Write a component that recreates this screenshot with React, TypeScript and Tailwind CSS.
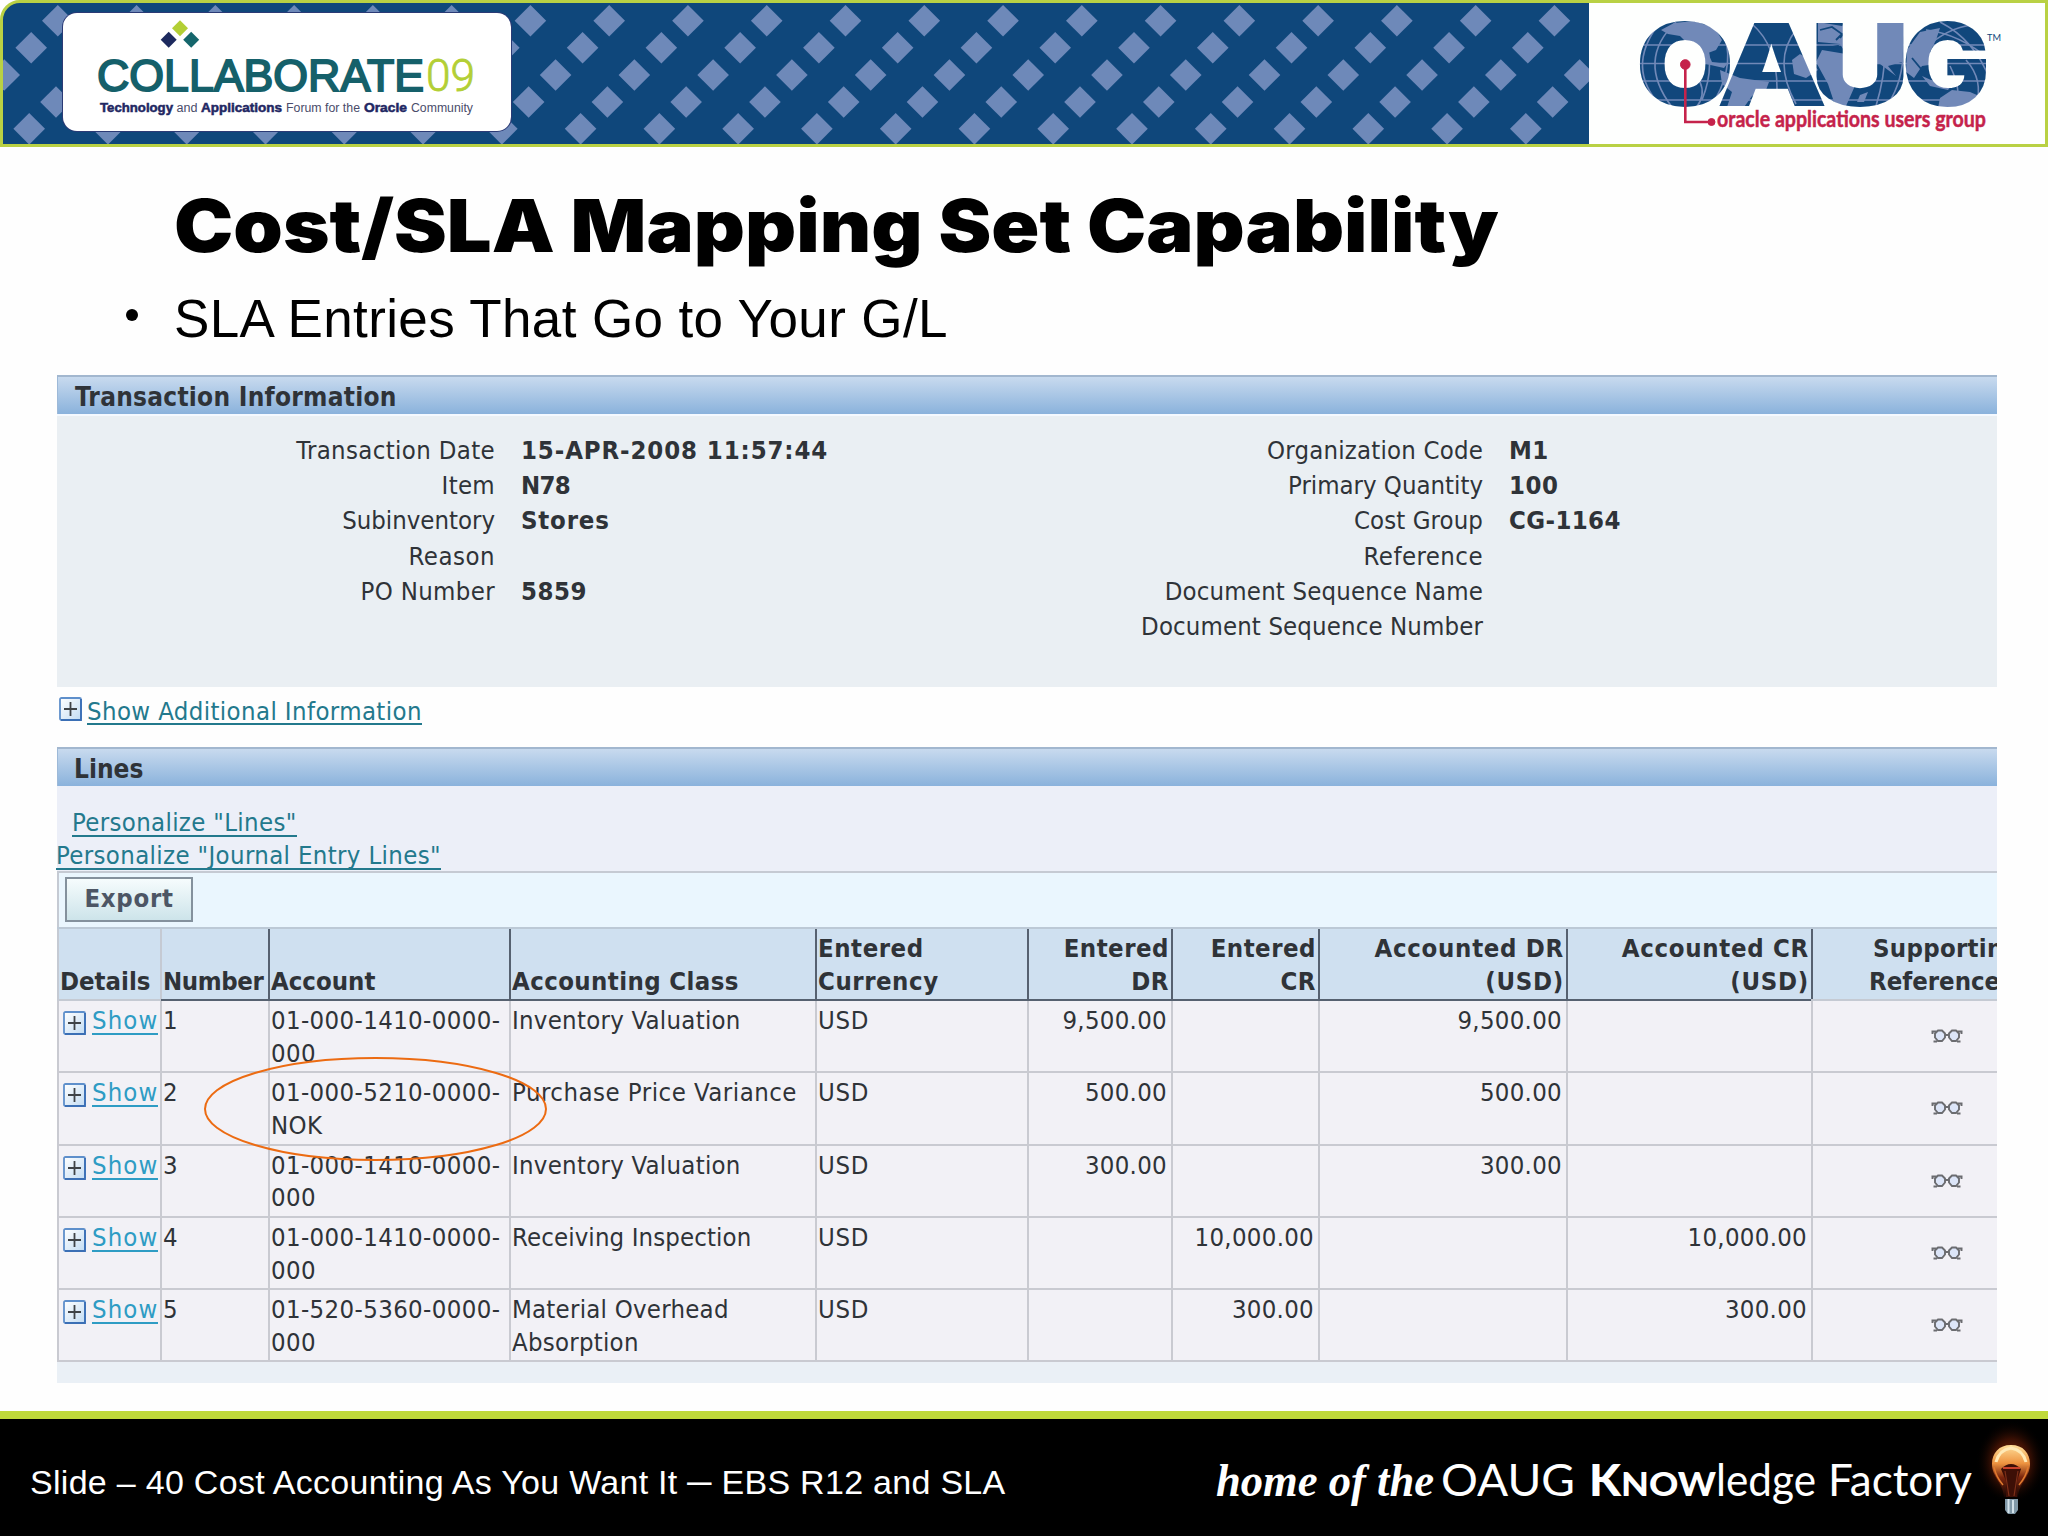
import { clsx } from 'clsx';

type Field = { label: string; value?: string; tracking?: string; valueTracking?: string };

type Line = {
  number: number;
  account: [string, string];
  accountingClass: string[];
  classTracking: string;
  currency: string;
  enteredDr?: string;
  enteredCr?: string;
};

const leftFields: Field[] = [
  { label: 'Transaction Date', value: '15-APR-2008 11:57:44', tracking: 'tracking-[0.36px]', valueTracking: 'tracking-[0.9px]' },
  { label: 'Item', value: 'N78', tracking: 'tracking-[0.3px]', valueTracking: 'tracking-[-0.7px]' },
  { label: 'Subinventory', value: 'Stores', valueTracking: 'tracking-[0.8px]' },
  { label: 'Reason', tracking: 'tracking-[0.5px]' },
  { label: 'PO Number', value: '5859', tracking: 'tracking-[0.35px]', valueTracking: 'tracking-[0.5px]' },
];

const rightFields: Field[] = [
  { label: 'Organization Code', value: 'M1', tracking: 'tracking-[0.2px]', valueTracking: 'tracking-[0.5px]' },
  { label: 'Primary Quantity', value: '100', valueTracking: 'tracking-[0.5px]' },
  { label: 'Cost Group', value: 'CG-1164', tracking: 'tracking-[0.1px]', valueTracking: 'tracking-[0.4px]' },
  { label: 'Reference', tracking: 'tracking-[0.45px]' },
  { label: 'Document Sequence Name', tracking: 'tracking-[0.18px]' },
  { label: 'Document Sequence Number', tracking: 'tracking-[0.13px]' },
];

const lines: Line[] = [
  { number: 1, account: ['01-000-1410-0000-', '000'], accountingClass: ['Inventory Valuation'], classTracking: 'tracking-[0.27px]', currency: 'USD', enteredDr: '9,500.00' },
  { number: 2, account: ['01-000-5210-0000-', 'NOK'], accountingClass: ['Purchase Price Variance'], classTracking: 'tracking-[0.5px]', currency: 'USD', enteredDr: '500.00' },
  { number: 3, account: ['01-000-1410-0000-', '000'], accountingClass: ['Inventory Valuation'], classTracking: 'tracking-[0.27px]', currency: 'USD', enteredDr: '300.00' },
  { number: 4, account: ['01-000-1410-0000-', '000'], accountingClass: ['Receiving Inspection'], classTracking: 'tracking-[0.13px]', currency: 'USD', enteredCr: '10,000.00' },
  { number: 5, account: ['01-520-5360-0000-', '000'], accountingClass: ['Material Overhead', 'Absorption'], classTracking: 'tracking-[0.25px]', currency: 'USD', enteredCr: '300.00' },
];

const columns = 'grid grid-cols-[103px_108px_241px_306px_212px_144px_147px_248px_245px_186px]';

// Diamond rows of the banner: x of one diamond in the row, y of its centre
const diamondRows = [
  [57.8, 20.7],
  [31.2, 47.8],
  [4.2, 75],
  [56, 102],
  [29.2, 128.8],
];

function Diamond({ x, y, r, fill }: { x: number; y: number; r: number; fill: string }) {
  return <path d={`M${x} ${y - r}L${x + r} ${y}L${x} ${y + r}L${x - r} ${y}Z`} fill={fill} />;
}

function CollaborateLogo() {
  return (
    <svg width="448" height="118" viewBox="63 13 448 118" className="block">
      <Diamond x={180} y={28.3} r={8} fill="#b3cf35" />
      <Diamond x={168.7} y={39.8} r={8} fill="#1d2a5e" />
      <Diamond x={191.2} y={39.8} r={8} fill="#15666c" />
      <g fontFamily="Liberation Sans, sans-serif">
        <text x="97" y="91" fontSize="45" fill="#15606a" stroke="#15606a" strokeWidth="1.900" textLength="327" lengthAdjust="spacingAndGlyphs">COLLABORATE</text>
        <text x="426" y="91" fontSize="45" fill="#b3cf35" stroke="#b3cf35" strokeWidth=".8" fontFamily="Roboto, sans-serif" fontWeight="300" textLength="49" lengthAdjust="spacingAndGlyphs">09</text>
        <g fontSize="12.5" fill="#4a4c6a">
          <text x="100" y="111.500" fill="#1f2763" stroke="#1f2763" strokeWidth=".5" fontWeight="700" textLength="73" lengthAdjust="spacingAndGlyphs">Technology</text>
          <text x="176.500" y="111.500" textLength="21" lengthAdjust="spacingAndGlyphs">and</text>
          <text x="201" y="111.500" fill="#1f2763" stroke="#1f2763" strokeWidth=".5" fontWeight="700" textLength="81" lengthAdjust="spacingAndGlyphs">Applications</text>
          <text x="286" y="111.500" textLength="74" lengthAdjust="spacingAndGlyphs">Forum for the</text>
          <text x="364" y="111.500" fill="#1f2763" stroke="#1f2763" strokeWidth=".5" fontWeight="700" textLength="43" lengthAdjust="spacingAndGlyphs">Oracle</text>
          <text x="411" y="111.500" textLength="62" lengthAdjust="spacingAndGlyphs">Community</text>
        </g>
      </g>
    </svg>
  );
}

function OaugLogo() {
  return (
    <svg width="456" height="141" viewBox="1589 3 456 141" className="block">
      <defs>
        <mask id="oaug" maskUnits="userSpaceOnUse" x="1589" y="3" width="456" height="141">
          <g fontFamily="Inter, sans-serif" fontWeight="800" fontSize="112" fill="#fff" stroke="#fff" strokeWidth="2">
            <text x="1636" y="105" textLength="98" lengthAdjust="spacingAndGlyphs">O</text>
            <text x="1718" y="105" textLength="108" lengthAdjust="spacingAndGlyphs">A</text>
            <text x="1810" y="105" textLength="100" lengthAdjust="spacingAndGlyphs">U</text>
            <text x="1902" y="105" textLength="88" lengthAdjust="spacingAndGlyphs">G</text>
          </g>
        </mask>
      </defs>
      <g mask="url(#oaug)">
        <rect x="1630" y="15" width="365" height="100" fill="#11477c" />
        <g stroke="#7189b8" strokeWidth="1.600" fill="none">
          <path d="M1630 45H1990M1630 63.500H1990M1630 81H1990M1630 100H1990" />
          <path d="M1676 22Q1636 60 1672 107M1658 25Q1626 68 1660 105M1700 82Q1706 95 1696 108M1722 28Q1736 62 1716 98" />
          <path d="M1752 24Q1782 50 1776 106M1796 30Q1772 60 1796 104M1700 30Q1718 60 1702 100M1882 22Q1890 60 1876 106M1900 22Q1910 70 1888 104" />
          <path d="M1926 30Q1960 34 1990 60M1940 22Q1975 40 1990 80M1930 44Q1960 20 1990 26M1950 66Q1962 90 1956 106M1966 60Q1984 80 1976 106" />
        </g>
        <g fill="#7189b8">
          <path d="M1661 30L1674 23L1694 21L1715 28L1722 40L1716 50L1708 53L1712 62L1727 64L1724 68L1706 64L1698 53L1688 44L1680 36L1668 34Z" />
          <path d="M1720 70L1740 78L1769 82L1766 90L1752 96L1742 110H1726L1732 92L1722 84Z" />
          <path d="M1792 60L1800 54L1810 60L1818 70L1806 78L1794 74Z" />
          <path d="M1818 22L1842 26L1848 20L1888 18L1905 22L1902 62L1888 66L1896 76L1880 64L1858 60L1854 88L1846 106L1836 108L1828 84L1816 62L1822 50L1846 54L1840 44L1818 42Z" />
          <path d="M1860 95L1868 92L1864 102L1857 102Z" />
          <path d="M1907 50L1920 32L1940 28L1936 40L1930 52L1936 64L1922 66L1914 78L1906 72Z" />
          <path d="M1940 98L1952 90L1970 92L1984 98L1978 108H1938Z" />
          <path d="M1922 76L1940 84L1954 82L1948 90L1930 86Z" />
        </g>
        <g stroke="#11477c" strokeWidth="1.800" fill="none">
          <path d="M1820 30L1832 27L1842 34L1836 40M1822 49L1838 46L1844 52M1848 28L1840 38M1912 58L1922 70L1934 76M1926 68L1940 70" />
        </g>
      </g>
      <g fill="#c5234b" stroke="#c5234b">
        <circle cx="1685.300" cy="64.500" r="4.800" />
        <circle cx="1711.500" cy="122" r="3.500" />
        <path d="M1685.300 64V122H1711" fill="none" strokeWidth="2.600" />
      </g>
      <text x="1717" y="126.700" fontFamily="Lato, sans-serif" fontWeight="700" fontSize="23.500" fill="#c5234b" stroke="#c5234b" strokeWidth=".5" textLength="269" lengthAdjust="spacingAndGlyphs">oracle applications users group</text>
      <text x="1987" y="41" fontFamily="Lato, sans-serif" fontSize="9.500" fill="#11477c" textLength="14" lengthAdjust="spacingAndGlyphs">TM</text>
    </svg>
  );
}

function Banner() {
  return (
    <header className="relative flex h-[147px] justify-between overflow-hidden rounded-tl-[20px] border-3 border-[#b9d144] bg-[#0f477b]">
      <svg width="2048" height="147" className="absolute -top-[3px] -left-[3px]">
        {diamondRows.flatMap(([x, y]) =>
          Array.from({ length: 21 }, (_, i) => (
            <Diamond key={`${y}-${i}`} x={x + i * 78.77} y={y} r={15.8} fill="#6e89b9" />
          ))
        )}
      </svg>
      <div className="relative mt-[10px] ml-[60px] h-[118px] w-[448px] rounded-[14px] bg-white shadow-[0_0_0_1px_#2b3a75]">
        <CollaborateLogo />
      </div>
      <div className="relative h-full w-[456px] bg-[#fefffe]">
        <OaugLogo />
      </div>
    </header>
  );
}

function ExpandIcon() {
  return (
    <svg width="23" height="24" viewBox="0 0 23 24" className="shrink-0">
      <defs>
        <linearGradient id="expand" x1="0" y1="0" x2="1" y2="1">
          <stop offset="0" stopColor="#ffffff" />
          <stop offset="1" stopColor="#c3dcf3" />
        </linearGradient>
      </defs>
      <rect x="1" y="1" width="21" height="22" rx="1.500" fill="url(#expand)" stroke="#5e8fcb" strokeWidth="1.800" />
      <path d="M22 2V23H2" fill="none" stroke="#3b6fb5" strokeWidth="1.800" />
      <path d="M11.500 5V19M5 12H18" stroke="#3f4347" strokeWidth="1.800" />
    </svg>
  );
}

function GlassesIcon() {
  return (
    <svg width="32" height="14" viewBox="0 0 32 14" fill="#dce5f8" stroke="#6b6c70" strokeWidth="1.900">
      <path d="M7 1.500H11L14 4.500V8.500L11 12H7L4 8.500V4.500ZM21 1.500H25L28 4.500V8.500L25 12H21L18 8.500V4.500Z" />
      <path d="M14 6H18M.500 2.500H5.500M31.500 2.500H26.500M1.500 2V5M30.500 2V5M2.500 12.500H6M26 12.500H29.500" fill="none" />
    </svg>
  );
}

function SectionHeader({ title, className }: { title: string; className?: string }) {
  return (
    <div className="flex h-[39px] items-center border-t-2 border-[#a2b7cf] bg-gradient-to-b from-[#c8daee] to-[#8ab2dc] pt-[2px] shadow-[inset_1px_0_0_#9db9d8]">
      <h2 className={clsx('text-[26px] leading-[32px] font-bold', className)}>{title}</h2>
    </div>
  );
}

function FieldList({ fields, className }: { fields: Field[]; className: string }) {
  return (
    <dl className={clsx('grid auto-rows-[35.2px] content-start gap-x-[26px] leading-[35.2px]', className)}>
      {fields.map((field) => (
        <div key={field.label} className="col-span-2 grid grid-cols-subgrid whitespace-nowrap">
          <dt className={clsx('text-right', field.tracking)}>{field.label}</dt>
          <dd className={clsx('font-bold', field.valueTracking)}>{field.value}</dd>
        </div>
      ))}
    </dl>
  );
}

function HeaderCell({ text, right, light, tracking }: { text: string[]; right?: boolean; light?: boolean; tracking?: string }) {
  return (
    <div
      className={clsx(
        'flex flex-col justify-end border-l-2 pb-px font-bold whitespace-nowrap',
        right ? 'items-end pr-[2px]' : 'pl-px',
        light ? 'border-l-[#c5cad3]' : 'border-l-[#566170]',
        tracking
      )}
    >
      {text.map((t) => (
        <span key={t}>{t}</span>
      ))}
    </div>
  );
}

function Cell({ text, right, tracking = 'tracking-[0.3px]' }: { text?: string[]; right?: boolean; tracking?: string }) {
  return (
    <div className={clsx('flex flex-col border-l-2 border-[#c9cad1] pt-[3px] whitespace-nowrap', right ? 'items-end pr-[4px]' : 'pl-px', tracking)}>
      {text?.map((t) => (
        <span key={t}>{t}</span>
      ))}
    </div>
  );
}

function LinesTable() {
  return (
    <div className="relative overflow-hidden text-[25.5px] leading-[32.8px]">
      <div className={clsx(columns, 'h-[72px] border-t-2 border-[#bcc9d6] bg-[#cfe0f0]')}>
        <HeaderCell text={['Details']} light />
        <HeaderCell text={['Number']} light tracking="tracking-[-0.4px]" />
        <HeaderCell text={['Account']} />
        <HeaderCell text={['Accounting Class']} tracking="tracking-[0.4px]" />
        <HeaderCell text={['Entered', 'Currency']} tracking="tracking-[0.55px]" />
        <HeaderCell text={['Entered', 'DR']} right tracking="tracking-[0.5px]" />
        <HeaderCell text={['Entered', 'CR']} right tracking="tracking-[0.5px]" />
        <HeaderCell text={['Accounted DR', '(USD)']} right tracking="tracking-[0.7px]" />
        <HeaderCell text={['Accounted CR', '(USD)']} right tracking="tracking-[0.7px]" />
        <div className="flex flex-col justify-end border-l-2 border-[#566170] pb-px pl-[56px] font-bold">
          <p className="pl-[4px] tracking-[0.3px]">Supporting</p>
          <p>References</p>
        </div>
      </div>
      <div className="flex h-[2px] bg-[#c5cad3]">
        <div className="ml-[104px] w-[1650px] bg-[#566170]" />
      </div>
      {lines.map((line) => (
        <div key={line.number} className={clsx(columns, 'h-[72.3px] border-b-2 border-[#c9cad1] bg-[#f2f1f6]')}>
          <div className="flex items-start gap-[6px] border-l-2 border-[#c9cad1] pt-[3px] pl-[4px]">
            <span className="mt-[7px]"><ExpandIcon /></span>
            <a className="h-[31px] border-b-2 border-[#2e9cc4] tracking-[1.1px] text-[#2e9cc4]">Show</a>
          </div>
          <Cell text={[String(line.number)]} />
          <Cell text={line.account} tracking="tracking-[0.38px]" />
          <Cell text={line.accountingClass} tracking={line.classTracking} />
          <Cell text={[line.currency]} tracking="tracking-[0.7px]" />
          <Cell text={line.enteredDr ? [line.enteredDr] : []} right />
          <Cell text={line.enteredCr ? [line.enteredCr] : []} right />
          <Cell text={line.enteredDr ? [line.enteredDr] : []} right />
          <Cell text={line.enteredCr ? [line.enteredCr] : []} right />
          <div className="flex border-l-2 border-[#c9cad1] pt-[28px] pl-[118px]">
            <GlassesIcon />
          </div>
        </div>
      ))}
      {/* Highlight round the overridden account */}
      <svg width="346" height="106" className="absolute top-[129px] left-[146px]">
        <ellipse cx="172.500" cy="53" rx="170.500" ry="51" fill="none" stroke="#ec6b12" strokeWidth="2" />
      </svg>
    </div>
  );
}

function Bulb() {
  return (
    <svg width="72" height="110" viewBox="0 0 72 110" className="shrink-0">
      <defs>
        <radialGradient id="glow">
          <stop offset="0" stopColor="#c2410c" stopOpacity=".9" />
          <stop offset=".55" stopColor="#7c2208" stopOpacity=".45" />
          <stop offset="1" stopColor="#000" stopOpacity="0" />
        </radialGradient>
        <linearGradient id="glass" x1="0" y1="0" x2="0" y2="1">
          <stop offset="0" stopColor="#ffdf9a" />
          <stop offset=".35" stopColor="#ee9440" />
          <stop offset=".62" stopColor="#7a250d" />
          <stop offset="1" stopColor="#140503" />
        </linearGradient>
      </defs>
      <ellipse cx="35" cy="43" rx="35" ry="42" fill="url(#glow)" />
      <path d="M35 26C23 26 16 34 16 45C16 58 27 64 28 78H42C43 64 54 58 54 45C54 34 47 26 35 26Z" fill="url(#glass)" />
      <path d="M25 50Q35 40 45 50L41 62V78H30V62Z" fill="#3d0f06" />
      <path d="M27 49H44" stroke="#c8402a" strokeWidth="2" />
      <path d="M29 52L33 77M42 52L38 77" stroke="#7d2f18" strokeWidth="1.200" fill="none" />
      <path d="M20 43Q23 31 35 29Q47 31 50 43" stroke="#ffe9b5" strokeWidth="3" fill="none" />
      <path d="M18 48Q20 58 27 66M52 48Q50 58 43 66" stroke="#e07a2e" strokeWidth="1.500" fill="none" />
      <path d="M29 80H42V91L39 95H32L29 91Z" fill="#8199a8" />
      <path d="M32.500 80V94M37 81V94" stroke="#d3e2ea" strokeWidth="2" />
    </svg>
  );
}

function Footer() {
  return (
    <footer className="flex h-[125px] justify-between border-t-8 border-[#bfd93a] bg-black">
      <p className="pt-[43px] pl-[30px] font-['Liberation_Sans',sans-serif] text-[34px] leading-[40px] tracking-[0.29px] whitespace-nowrap text-white">
        Slide – 40 Cost Accounting As You Want It ─ EBS R12 and SLA
      </p>
      <div className="flex">
        <svg width="770" height="117" viewBox="1206 1419 770 117" fill="#fff" fontFamily="Lato, sans-serif" fontSize="44">
          <text x="1216" y="1496" fontFamily="Liberation Serif, serif" fontStyle="italic" fontWeight="700" fontSize="46" textLength="218" lengthAdjust="spacingAndGlyphs">home of the</text>
          <text x="1441" y="1496" textLength="134" lengthAdjust="spacingAndGlyphs">OAUG</text>
          <text x="1589" y="1496" fontWeight="900" textLength="32" lengthAdjust="spacingAndGlyphs">K</text>
          <text x="1621" y="1496" fontWeight="900" fontSize="32" textLength="95" lengthAdjust="spacingAndGlyphs">NOW</text>
          <text x="1716" y="1496" textLength="100" lengthAdjust="spacingAndGlyphs">ledge</text>
          <text x="1828" y="1496" textLength="144" lengthAdjust="spacingAndGlyphs">Factory</text>
        </svg>
        <Bulb />
      </div>
    </footer>
  );
}

export default function App() {
  return (
    <div className="flex h-[1536px] w-[2048px] flex-col overflow-hidden bg-[#fefefe] text-black">
      <Banner />

      <div className="h-[228px] font-['Liberation_Sans',sans-serif] whitespace-nowrap">
        <h1 className="ml-[174px] w-fit origin-left scale-x-[1.087] pt-[33px] font-[Inter,sans-serif] text-[73px] leading-[92px] font-black">Cost/SLA Mapping Set Capability</h1>
        <div className="flex pl-[122px] text-[53px] leading-[60px]">
          <span className="w-[52px] pt-[37px] pl-[4px]">
            <span className="block h-[12px] w-[12px] rounded-full bg-black" />
          </span>
          <p className="pt-[17px] tracking-[0.38px]">SLA Entries That Go to Your G/L</p>
        </div>
      </div>

      <main className="ml-[57px] w-[1940px] flex-1 font-['DejaVu_Sans_Condensed','DejaVu_Sans',sans-serif] text-[25.5px] text-[#2f3338]">
        <section className="h-[312px] bg-[#eaeff3]">
          <SectionHeader title="Transaction Information" className="pl-[18px] tracking-[0.25px]" />
          <div className="flex border-t-2 border-[#f4f9ff] pt-[17px]">
            <FieldList fields={leftFields} className="w-[988px] grid-cols-[438px_1fr]" />
            <FieldList fields={rightFields} className="grid-cols-[438px_1fr]" />
          </div>
        </section>

        <div className="flex h-[60px] items-start gap-[5px] pt-[10px] pl-[2px]">
          <ExpandIcon />
          <a className="h-[28px] border-b-2 border-[#23798d] leading-[28px] tracking-[0.39px] text-[#23798d]">Show Additional Information</a>
        </div>

        <section className="h-[636px] bg-[#eaf0f6]">
          <SectionHeader title="Lines" className="pl-[17px]" />
          <div className="flex h-[85px] flex-col items-start bg-[#eceff8] pt-[20px] leading-[32px] text-[#23798d]">
            <a className="ml-[15px] h-[31px] border-b-2 border-[#23798d] tracking-[0.34px]">Personalize "Lines"</a>
            <a className="-ml-px mt-[2px] h-[31px] border-b-2 border-[#23798d] tracking-[0.36px]">Personalize "Journal Entry Lines"</a>
          </div>
          <div className="h-[56px] border-t-2 border-l-2 border-[#c5cad3] bg-[#eaf6fe] pt-[4px] pl-[6px]">
            <button className="block h-[45px] w-[128px] border-2 border-[#84919d] bg-gradient-to-b from-[#f6fcfd] to-[#cde4ea] pb-[3px] text-[25.5px] leading-[38px] font-bold tracking-[0.7px] text-[#4d5665]">Export</button>
          </div>
          <LinesTable />
        </section>
      </main>

      <Footer />
    </div>
  );
}
